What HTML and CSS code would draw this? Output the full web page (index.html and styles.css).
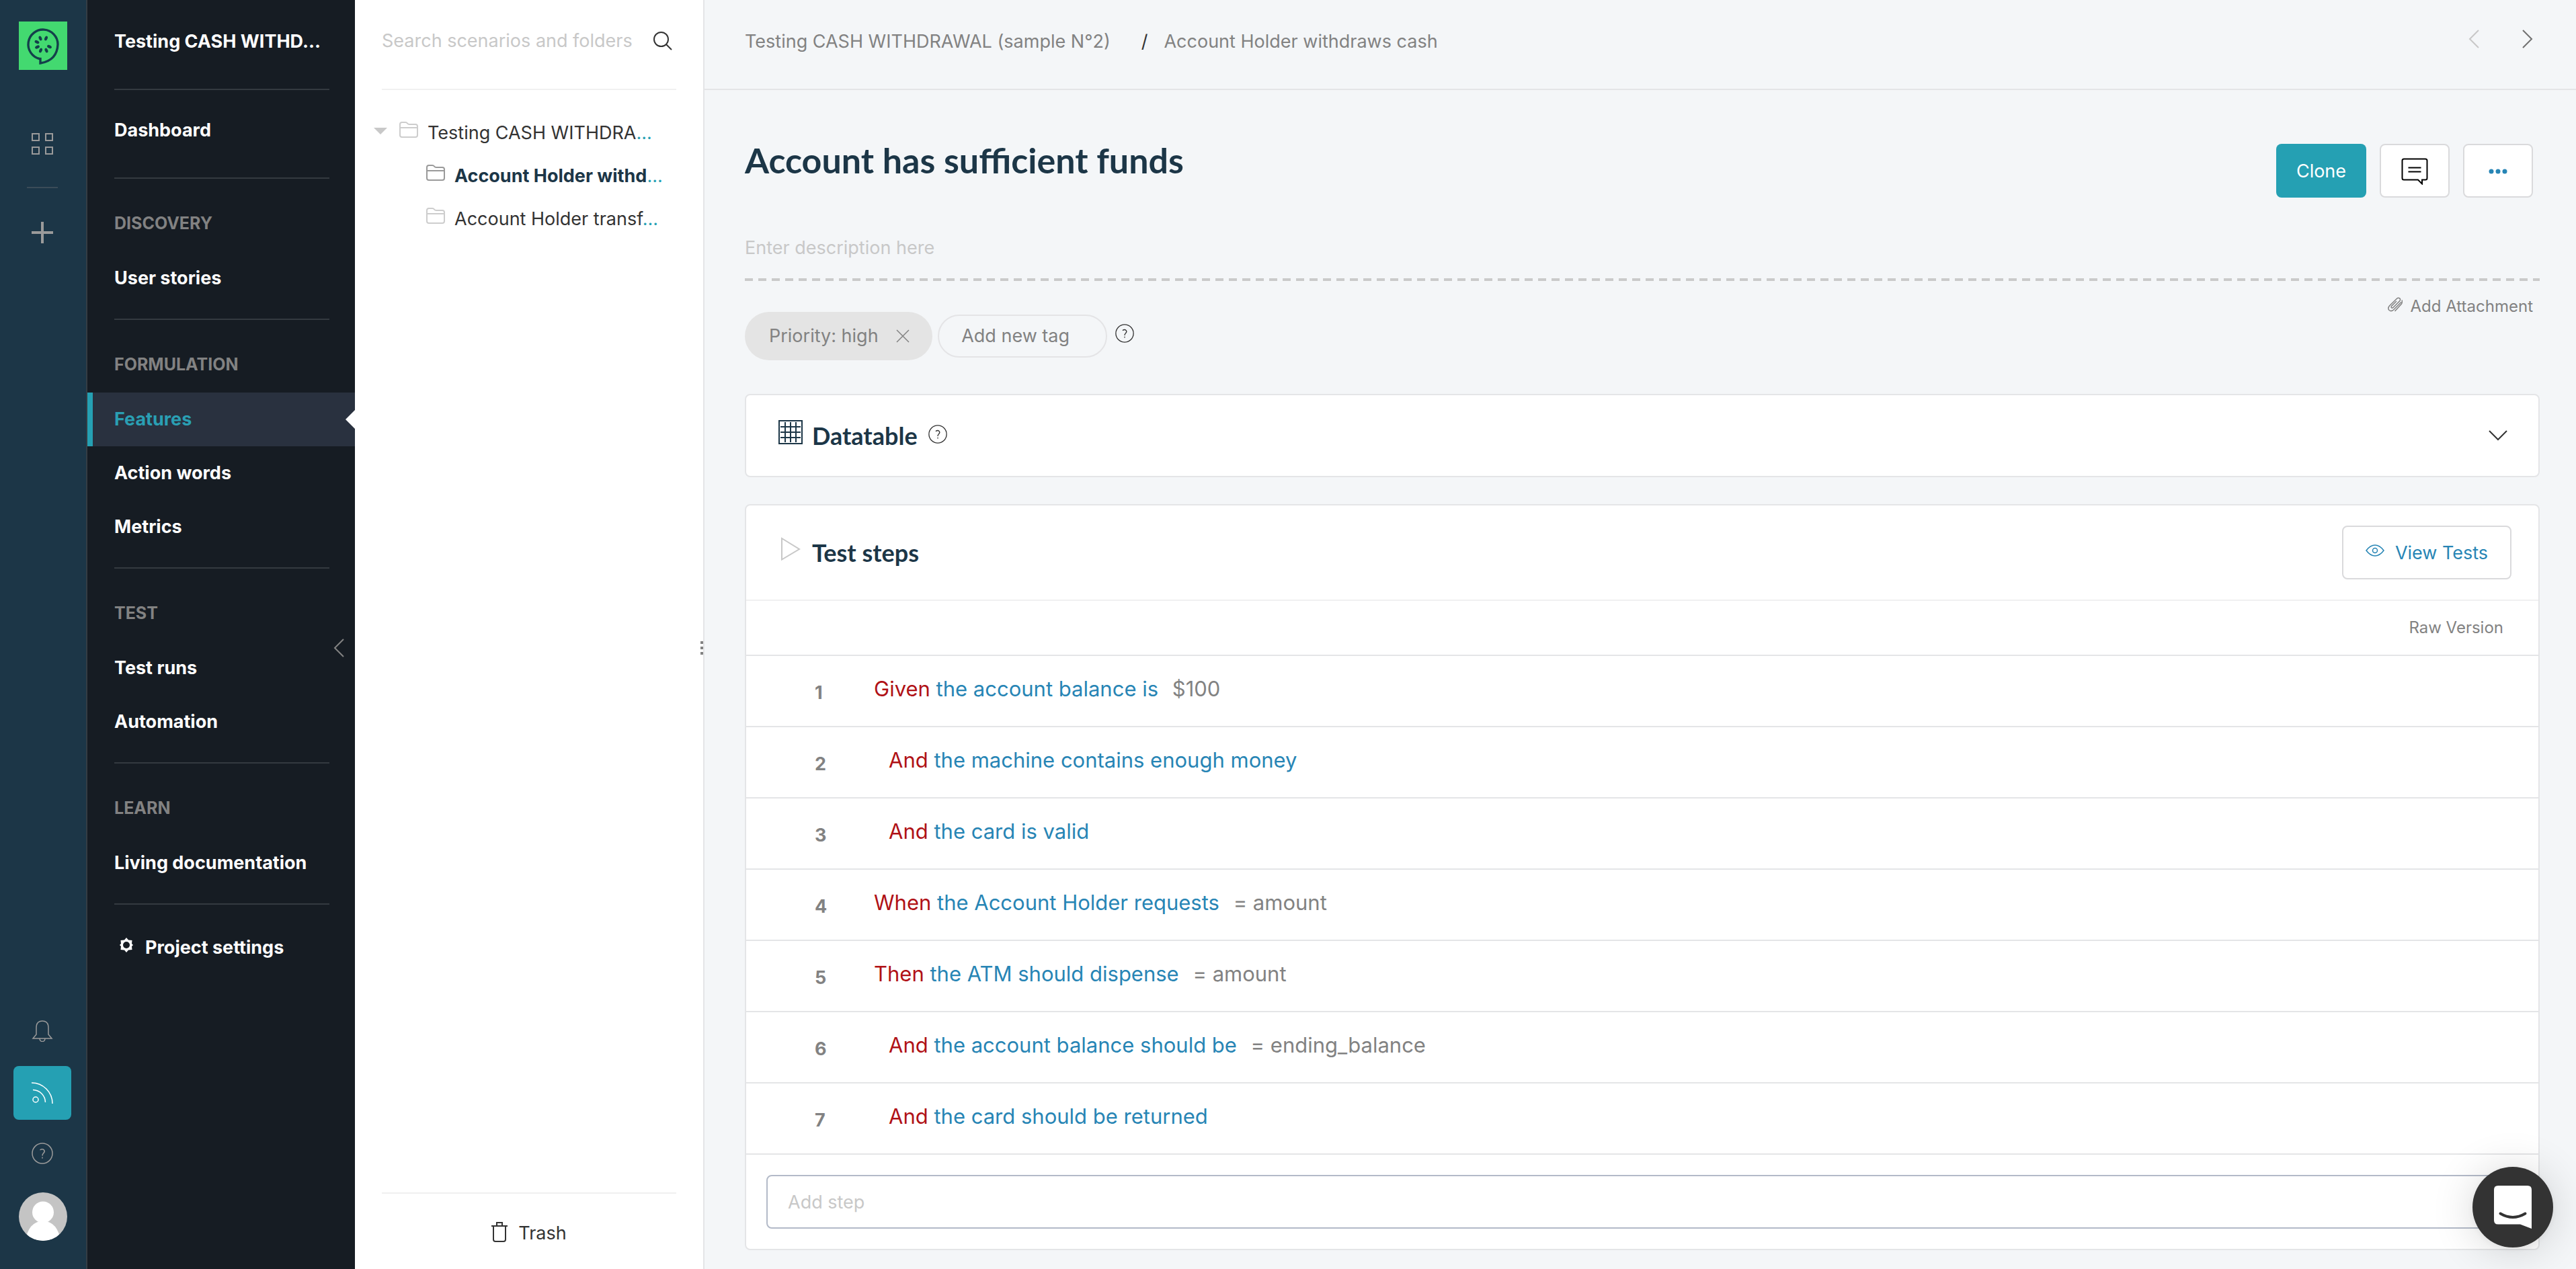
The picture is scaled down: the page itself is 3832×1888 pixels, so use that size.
FILE: index.html
```html
<!DOCTYPE html>
<html lang="en">
<head>
<meta charset="utf-8">
<meta name="viewport" content="width=device-width, initial-scale=1">
<title>Account has sufficient funds</title>
<link rel="stylesheet" href="styles.css">
</head>
<body>
<svg class="sprite" aria-hidden="true">
  <symbol id="i-folder" viewBox="0 0 28 24"><path d="M1 20V4q0-3 3-3h5q2 0 3 1.500 1 1.500 3 1.500h9q3 0 3 3v13q0 3-3 3H4q-3 0-3-3ZM1 9h26"/></symbol>
  <symbol id="i-help" viewBox="0 0 32 32"><circle cx="16" cy="16" r="15"/><path d="M12.500 11q3.500-2.500 6 0 1.800 2.500-.8 4.600Q16 17 16 19.500M16 21.500v2"/></symbol>
</svg>

<nav class="rail" aria-label="Workspace">
  <a class="logo" href="#" aria-label="Home">
    <svg viewBox="0 0 72 72"><rect width="72" height="72" fill="#43d970"/><path d="M31 55.500A22 22 0 1 1 58 34Q57 58 32 62V55.500Z" fill="none" stroke="#14404b" stroke-width="3.400"/><g fill="#14404b"><ellipse cx="32" cy="25" rx="2.200" ry="3.600" transform="rotate(-22 32 25)"/><ellipse cx="40.500" cy="25" rx="2.200" ry="3.600" transform="rotate(22 40.500 25)"/><ellipse cx="27" cy="30.500" rx="2.200" ry="3.600" transform="rotate(-65 27 30.500)"/><ellipse cx="27.500" cy="38" rx="2.200" ry="3.600" transform="rotate(65 27.500 38)"/><ellipse cx="45.500" cy="37.500" rx="2.200" ry="3.600" transform="rotate(-65 45.500 37.500)"/><ellipse cx="32.500" cy="43" rx="2.200" ry="3.600" transform="rotate(22 32.500 43)"/><ellipse cx="41" cy="43" rx="2.200" ry="3.600" transform="rotate(-22 41 43)"/></g></svg>
  </a>
  <a class="rail-link apps" href="#" aria-label="Projects"><svg viewBox="0 0 32 32"><path d="M1 1h10v10H1zM21 1h10v10H21zM1 21h10v10H1zM21 21h10v10H21z"/></svg></a>
  <hr class="rail-rule">
  <a class="rail-link add" href="#" aria-label="New"><svg viewBox="0 0 32 32"><path stroke-width="4" d="M16 0v32M0 16h32"/></svg></a>
  <div class="rail-bottom">
    <a class="rail-link" href="#" aria-label="Notifications"><svg class="thin" viewBox="0 0 32 32"><path d="M7 21V11q0-10 9-10t9 10v10l5 6H2ZM12 27.500q.5 4 4 4t4-4"/></svg></a>
    <a class="rail-link feed" href="#" aria-label="Feed"><svg class="thin" viewBox="0 0 32 32"><path d="M0 1A31 31 0 0 1 31 32M2 11.500A19 19 0 0 1 20.500 30"/><circle cx="6" cy="26" r="4"/></svg></a>
    <a class="rail-link" href="#" aria-label="Help"><svg class="thin"><use href="#i-help"/></svg></a>
    <a class="avatar" href="#" aria-label="Profile"><svg viewBox="0 0 72 72"><rect width="72" height="72" fill="#c4c4c4"/><circle cx="36" cy="29.500" r="16" fill="#fff"/><path d="M10 72Q14 44 36 42 58 44 62 72Z" fill="#fff"/></svg></a>
  </div>
</nav>

<nav class="sidebar" aria-label="Project">
  <p class="project">Testing CASH WITHD...</p>
  <div class="group home"><a href="#">Dashboard</a></div>
  <div class="group"><h2>DISCOVERY</h2><a href="#">User stories</a></div>
  <div class="group"><h2>FORMULATION</h2><a class="active" href="#" aria-current="page">Features</a><a href="#">Action words</a><a href="#">Metrics</a></div>
  <div class="group"><h2>TEST</h2><a href="#">Test runs</a><a href="#">Automation</a></div>
  <div class="group"><h2>LEARN</h2><a href="#">Living documentation</a></div>
  <div class="group settings"><a href="#"><svg viewBox="0 0 20 24"><path d="M10 1 13 4.500 18.500 5 18 10 20 12 18 14 18.500 19 13 19.500 10 23 7 19.500 1.500 19 2 14 0 12 2 10 1.500 5 7 4.500Z"/><circle cx="10" cy="12" r="5"/></svg>Project settings</a></div>
  <button class="collapse" type="button" aria-label="Collapse menu"><svg viewBox="0 0 16 28"><path d="M15 1 2 14l13 13"/></svg></button>
</nav>

<aside class="tree-panel">
  <form class="search">
    <input type="text" placeholder="Search scenarios and folders" aria-label="Search scenarios and folders">
    <button type="submit" aria-label="Search"><svg viewBox="0 0 28 28"><circle cx="11.500" cy="11.500" r="10.500"/><path d="m19 19 8 8"/></svg></button>
  </form>
  <ul class="tree">
    <li><a href="#"><svg class="caret" viewBox="0 0 20 10"><path d="M0 0h20L10 10Z"/></svg><svg class="folder"><use href="#i-folder"/></svg><span>Testing CASH WITHDRA<i>...</i></span></a>
      <ul>
        <li><a class="current" href="#"><svg class="folder"><use href="#i-folder"/></svg><span><b>Account Holder withd</b><i>...</i></span></a></li>
        <li><a href="#"><svg class="folder"><use href="#i-folder"/></svg><span>Account Holder transf<i>...</i></span></a></li>
      </ul>
    </li>
  </ul>
  <a class="trash" href="#"><svg viewBox="0 0 24 30"><path d="M0 6h24M8 6V1h8v5M3 6v20q0 3 3 3h12q3 0 3-3V6"/></svg>Trash</a>
  <div class="handle"><svg viewBox="0 0 4 20"><path d="M0 0h4v4H0zM0 8h4v4H0zM0 16h4v4H0z"/></svg></div>
</aside>

<main>
  <header class="topbar">
    <nav class="crumbs" aria-label="Breadcrumb"><a href="#">Testing CASH WITHDRAWAL (sample N°2)</a><span>/</span><a href="#">Account Holder withdraws cash</a></nav>
    <nav class="pager" aria-label="Scenarios">
      <a class="off" href="#" aria-label="Previous"><svg viewBox="0 0 16 28"><path d="M15 1 2 14l13 13"/></svg></a>
      <a href="#" aria-label="Next"><svg viewBox="0 0 16 28"><path d="m1 1 13 13L1 27"/></svg></a>
    </nav>
  </header>

  <div class="content">
    <div class="title-row">
      <h1>Account has sufficient funds</h1>
      <div class="actions">
        <button class="btn primary" type="button">Clone</button>
        <button class="btn icon" type="button" aria-label="Comments"><svg class="comment" viewBox="0 0 40 40"><path d="M4 1.500h32q2.500 0 2.500 2.500v26q0 2.500-2.500 2.500H31v6L25 32.500H4Q1.500 32.500 1.500 30V4Q1.500 1.500 4 1.500ZM10.500 14.500h19M10.500 20.500h19"/></svg></button>
        <button class="btn icon" type="button" aria-label="More"><svg class="dots" viewBox="0 0 28 8"><circle cx="4" cy="4" r="3.500"/><circle cx="14" cy="4" r="3.500"/><circle cx="24" cy="4" r="3.500"/></svg></button>
      </div>
    </div>
    <input class="description" type="text" placeholder="Enter description here" aria-label="Description">
    <div class="meta">
      <div class="tags">
        <span class="tag">Priority: high<button type="button" aria-label="Remove tag"><svg viewBox="0 0 20 20"><path d="m1 1 18 18M19 1 1 19"/></svg></button></span>
        <button class="new-tag" type="button">Add new tag</button>
        <svg class="help"><use href="#i-help"/></svg>
      </div>
      <a class="attach" href="#"><svg viewBox="0 0 22 22"><path d="m13 6-7.500 7.500q-1 2 .5 2.500 1 .5 2-.5L18 5.500q1.500-3-1-4-2-.8-3.500.7L2.500 13q-3 3.500-.5 6.500 3.200 2.500 6.500-.5L20 7.500M10.500 21 20.500 10q1.500-3 .5-5.500"/></svg>Add Attachment</a>
    </div>

    <section class="card datatable">
      <h2><svg class="grid" viewBox="0 0 36 36"><path d="M1 1h34v34H1zM3 10h30M3 18h30M3 26h30M10 3v30M18 3v30M26 3v30"/></svg>Datatable<svg class="help"><use href="#i-help"/></svg></h2>
      <button class="expand" type="button" aria-label="Expand"><svg viewBox="0 0 28 16"><path d="m1 1 13 13L27 1"/></svg></button>
    </section>

    <section class="card">
      <div class="card-head">
        <h2><svg class="play" viewBox="0 0 36 36"><path d="M5 2v31.500L31 18Z"/></svg>Test steps</h2>
        <button class="btn view" type="button"><svg viewBox="0 0 28 18"><path d="M1 9q6-8 13-8t13 8q-6 8-13 8T1 9Z"/><circle cx="14" cy="9" r="3.500"/></svg>View Tests</button>
      </div>
      <div class="raw"><a href="#">Raw Version</a></div>
      <ol class="steps">
        <li><span class="num">1</span><p><b>Given</b> the account balance is <i>$100</i></p></li>
        <li class="and"><span class="num">2</span><p><b>And</b> the machine contains enough money</p></li>
        <li class="and"><span class="num">3</span><p><b>And</b> the card is valid</p></li>
        <li><span class="num">4</span><p><b>When</b> the Account Holder requests <i>= amount</i></p></li>
        <li><span class="num">5</span><p><b>Then</b> the ATM should dispense <i>= amount</i></p></li>
        <li class="and"><span class="num">6</span><p><b>And</b> the account balance should be <i>= ending_balance</i></p></li>
        <li class="and"><span class="num">7</span><p><b>And</b> the card should be returned</p></li>
      </ol>
      <div class="add-step"><input type="text" placeholder="Add step" aria-label="Add step"></div>
    </section>
  </div>
</main>

<button class="chat" type="button" aria-label="Open chat"><svg viewBox="0 0 56 64"><path d="M6 0h44q6 0 6 6v58l-17-6.500H6q-6 0-6-6V6q0-6 6-6Z" fill="#fff"/><path d="M9.500 41.500q18.500 11 37 0" fill="none" stroke="#333" stroke-width="4" stroke-linecap="round"/></svg></button>
</body>
</html>
```
FILE: styles.css
```css
* { box-sizing: border-box; }
body {
  margin: 0;
  display: flex;
  min-height: 100vh;
  background: #f4f6f8;
  color: #333;
  font: 27px/40px Inter, "Liberation Sans", sans-serif;
}
a { color: inherit; text-decoration: none; }
h1, h2, p, ul, ol { margin: 0; padding: 0; }
ul, ol { list-style: none; }
i { font-style: normal; }
button, input { font: inherit; color: inherit; background: none; border: 0; padding: 0; margin: 0; }
button { cursor: pointer; }
input { outline: 0; min-width: 0; }
input::placeholder { color: #c8c8c8; opacity: 1; }
svg { display: block; flex: none; fill: none; stroke: currentColor; stroke-width: 2; }
.sprite { position: absolute; width: 0; height: 0; }

/* Icon rail */
.rail {
  flex: none;
  width: 130px;
  display: flex;
  flex-direction: column;
  align-items: flex-start;
  padding: 32px 0 42px;
  background: #1c3647;
  border-right: 2px solid #343d44;
  color: #9a9a9a;
}
.logo, .avatar { margin-left: 28px; width: 72px; height: 72px; overflow: hidden; }
.logo svg, .avatar svg { width: 72px; height: 72px; stroke: none; }
.avatar { border-radius: 50%; margin-top: 20px; }
.rail-link {
  width: 86px;
  height: 80px;
  margin-left: 20px;
  display: grid;
  place-items: center;
  border-radius: 8px;
}
.rail-link svg { width: 32px; height: 32px; }
.rail-link .thin { stroke-width: 1.5; }
.apps { margin-top: 70px; }
.rail-rule { width: 46px; margin: 24px 0 26px 40px; border: 0; border-top: 2px solid #3a4c58; }
.rail-bottom { margin-top: auto; display: flex; flex-direction: column; }
.rail-bottom .rail-link + .rail-link { margin-top: 12px; }
.rail-bottom .feed { background: #25a0b3; color: #fff; }
.rail-bottom .feed + .rail-link { height: 76px; }

/* Project menu */
.sidebar {
  position: relative;
  flex: none;
  width: 398px;
  background: #161c23;
  color: #fff;
  font-weight: 700;
}
.project { margin: 0 38px 0 40px; padding: 42px 0 50px; border-bottom: 2px solid #343a40; white-space: nowrap; }
.group { padding-bottom: 20px; }
.group::after { content: ""; display: block; margin: 20px 38px -20px 40px; border-bottom: 2px solid #343a40; }
.group h2 { padding: 50px 40px 26px; font-size: 25px; line-height: 32px; color: #828282; }
.group a { display: flex; align-items: center; height: 80px; padding-left: 40px; }
.home { padding: 20px 0 30px; }
.home::after { margin: 30px 38px -30px 40px; }
.settings { padding-top: 24px; }
.settings::after { content: none; }
.settings a svg { width: 20px; height: 24px; margin: 0 18px 8px 8px; fill: #fff; stroke: none; }
.settings a circle { fill: #161c23; }
.group .active { position: relative; background: #29313f; color: #2a9fb3; border-left: 8px solid #25a0b3; padding-left: 32px; }
.active::after {
  content: "";
  position: absolute;
  right: 0;
  top: 26px;
  border: 14px solid transparent;
  border-left: 0;
  border-right-color: #fff;
}
.collapse { position: absolute; right: 16px; top: 950px; color: #828282; }
.collapse svg { width: 16px; height: 28px; }

/* Scenario tree */
.tree-panel {
  position: relative;
  flex: none;
  width: 520px;
  display: flex;
  flex-direction: column;
  background: #fff;
  border-right: 2px solid #e4e5e7;
}
.search { display: flex; align-items: center; height: 134px; margin: 0 40px; padding-bottom: 10px; border-bottom: 2px solid #f0f0f0; }
.search input { flex: 1; }
.search button { margin-right: 6px; }
.search svg { width: 28px; height: 28px; }
.tree { padding-top: 32px; }
.tree ul { padding-left: 40px; }
.tree a { display: flex; align-items: center; height: 64px; padding-left: 66px; white-space: nowrap; }
.tree > li > a { padding-left: 28px; }
.caret { width: 20px; height: 10px; margin: 0 18px 6px 0; fill: #c8c8c8; stroke: none; }
.folder { width: 28px; height: 24px; margin: 0 14px 10px 0; color: #cdcdcd; }
.current .folder { color: #9a9a9a; }
.tree b { color: #1c3647; }
.tree i { color: #25a0b3; }
.trash {
  margin: auto 40px 0;
  height: 114px;
  padding-top: 6px;
  border-top: 2px solid #f0f0f0;
  display: flex;
  align-items: center;
  justify-content: center;
  gap: 16px;
}
.trash svg { width: 24px; height: 30px; margin-bottom: 4px; }
.handle { position: absolute; right: 0; top: 954px; }
.handle svg { width: 4px; height: 20px; fill: #828282; stroke: none; }

/* Main column */
main { flex: 1; min-width: 0; }
.topbar {
  display: flex;
  justify-content: space-between;
  height: 134px;
  padding: 42px 64px 0 60px;
  border-bottom: 2px solid #e4e5e7;
}
.crumbs { display: flex; color: #828282; white-space: nowrap; }
.crumbs span { margin: 0 24px 0 46px; color: #333; }
.pager { display: flex; gap: 64px; color: #707070; }
.pager .off { color: #c8c8c8; }
.pager svg { width: 16px; height: 28px; margin-top: 2px; }
.content { padding: 80px 54px 28px 60px; }
.title-row { display: flex; justify-content: space-between; height: 80px; padding-right: 10px; }
h1, h2 { color: #1c3647; }
h1 { font: 700 52px/48px Lato, sans-serif; }
.actions { display: flex; gap: 20px; }
.btn { height: 80px; padding-top: 2px; border-radius: 8px; border: 2px solid #dadadc; background: #fff; display: flex; align-items: center; justify-content: center; }
.primary { width: 134px; background: #25a0b3; border: 0; color: #fff; }
.btn.icon { width: 104px; }
.comment { width: 40px; height: 40px; color: #000; }
.dots { width: 28px; height: 8px; fill: #2785b5; stroke: none; }
.description {
  display: block;
  width: 100%;
  height: 124px;
  padding: 48px 0 24px;
  background: repeating-linear-gradient(90deg, #cacaca 0 12px, transparent 12px 20px) left bottom / 100% 4px no-repeat;
}
.meta { display: flex; justify-content: space-between; align-items: flex-start; padding: 18px 10px 0 0; }
.tags { display: flex; align-items: center; margin-top: 28px; gap: 8px; color: #828282; }
.tag { display: flex; align-items: center; gap: 26px; height: 72px; padding: 0 34px 0 36px; border-radius: 36px; background: #e4e4e4; }
.tag svg { width: 20px; height: 20px; stroke-width: 1.5; }
.new-tag { width: 252px; height: 64px; padding-right: 20px; border: 2px solid #e4e4e6; border-radius: 32px; }
.help { width: 28px; height: 28px; color: #333; stroke-width: 1.5; }
.tags .help { margin: 0 0 8px 4px; }
.attach { display: flex; align-items: center; gap: 12px; font-size: 24px; color: #828282; }
.attach svg { width: 22px; height: 22px; margin-bottom: 6px; stroke-width: 1.5; }

.card { background: #fff; border: 2px solid #e4e5e7; border-radius: 8px; margin-top: 40px; }
.card h2 { display: flex; align-items: center; font: 700 36px/40px Lato, sans-serif; }
.card h2 svg:first-child { width: 36px; height: 36px; margin: 0 14px 10px 0; }
.card h2 .play { color: #c8c8c8; }
.datatable { margin-top: 50px; display: flex; align-items: center; justify-content: space-between; height: 124px; padding: 0 46px 0 48px; }
.card h2 .help { margin: 0 0 4px 16px; }
.expand svg { width: 28px; height: 16px; }
.card-head { display: flex; align-items: center; justify-content: space-between; height: 142px; padding: 0 40px 0 48px; border-bottom: 2px solid #f0f0f1; }
.view { width: 252px; gap: 16px; color: #2785b5; }
.view svg { width: 28px; height: 18px; margin-bottom: 8px; stroke-width: 1.5; }
.raw { height: 82px; padding: 20px 52px; text-align: right; font-size: 24px; color: #828282; border-bottom: 2px solid #e4e5e7; }
.steps li { display: flex; height: 106px; padding: 29px 102px 0; border-bottom: 2px solid #e4e5e7; color: #2785b5; font-size: 31px; }
.num { width: 88px; padding-top: 6px; font-size: 27px; font-weight: 700; color: #828282; }
.and p { padding-left: 22px; }
.steps b { font-weight: 400; color: #b01116; }
.steps i { color: #828282; margin-left: 12px; }
.add-step { padding: 30px; }
.add-step input { display: block; width: 100%; height: 80px; padding: 0 30px; border: 2px solid #b3bac8; border-radius: 8px; }

/* Chat launcher */
.chat {
  position: fixed;
  right: 34px;
  bottom: 32px;
  width: 120px;
  height: 120px;
  border-radius: 50%;
  background: #333;
  display: grid;
  place-items: center;
  box-shadow: 0 2px 12px rgba(0, 0, 0, .06), 0 4px 64px rgba(0, 0, 0, .16);
}
.chat svg { width: 56px; height: 64px; stroke: none; }
```
